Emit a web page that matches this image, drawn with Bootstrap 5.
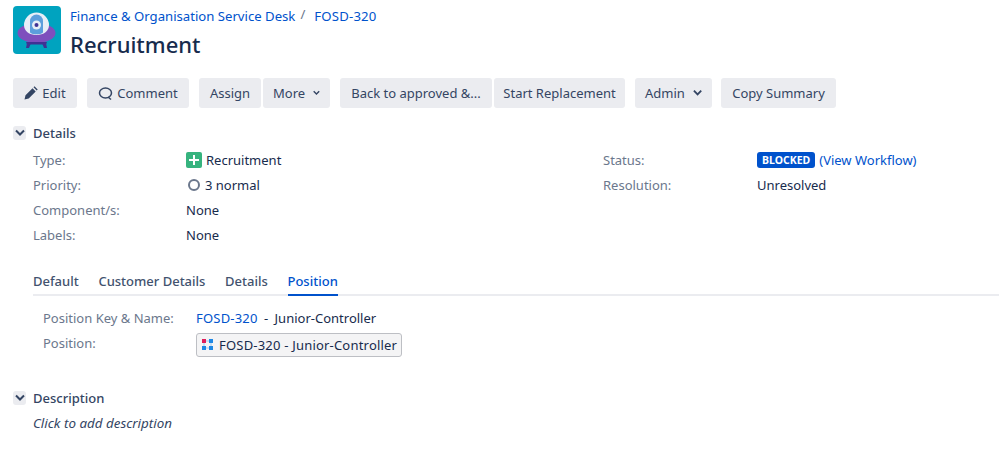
<!DOCTYPE html>
<html lang="en">
<head>
    <meta charset="UTF-8">
    <link rel="stylesheet" href="https://cdn.jsdelivr.net/npm/bootstrap@5.3.0/dist/css/bootstrap.min.css">
    <title>Recruitment</title>
    <style>
        body { font-family: "Noto Sans", "Open Sans", sans-serif; font-size: 13px; line-height: 20px; color: #172b4d; background: #fff; overflow: hidden; }
        a { color: #0052cc; text-decoration: none; }
        .page-wrap { padding: 6px 0 0 13px; }
        .issue-head { height: 54px; }
        .project-logo { width: 48px; height: 48px; flex: none; margin-right: 9px; }
        .crumbs { height: 20px; font-size: 13.15px; }
        .crumb-sep { color: #6b778c; margin: 0 9px 0 5px; position: relative; top: -2px; }
        .key-link { letter-spacing: .2px; }
        .pos-rest { word-spacing: 3px; }
        .issue-title { font-size: 22px; font-weight: 500; line-height: 28px; margin: 4px 0 0; color: #172b4d; }
        .tool-bar { margin-top: 18px; height: 30px; }
        .tool-btn { background: #ebecf0; color: #344563; border: 0; border-radius: 3px; height: 30px; padding: 0 10px; display: flex; align-items: center; justify-content: center; white-space: nowrap; font-size: 13px; }
        .tool-gap { margin-right: 10px; }
        .tool-join { margin-right: 2px; }
        .w-edit { width: 64px; } .w-comment { width: 102px; } .w-assign { width: 62px; } .w-more { width: 67px; }
        .w-back { width: 152px; } .w-start { width: 131px; } .w-admin { width: 77px; } .w-copy { width: 115px; margin-left: -1px; }
        .mod-head { height: 20px; font-weight: 500; color: #344563; }
        .twist { width: 13px; height: 14px; background: #ebecf0; border-radius: 3px; margin-right: 7px; display: flex; align-items: center; justify-content: center; }
        .sec-details { margin-top: 15px; }
        .prop-grid { margin: 4px 0 0 20px; }
        .prop-row { height: 25px; display: flex; align-items: center; }
        .prop-name { color: #6b778c; width: 153px; flex: none; }
        .prop-col-l { width: 570px; flex: none; }
        .prop-col-l + div .prop-name { width: 154px; }
        .prop-val { display: flex; align-items: center; }
        .type-icon { width: 16px; height: 16px; margin-right: 4px; }
        .prio-icon { width: 14px; height: 14px; margin: 0 4px 0 1px; }
        .status-pill { background: #0052cc; color: #fff; font-size: 10.5px; font-weight: 700; line-height: 16px; height: 16px; padding: 0 5px; border-radius: 3px; margin-right: 4px; }
        .tab-strip { margin: 24px 0 0 20px; height: 25px; border-bottom: 2px solid #ebecf0; }
        .tab-item { font-weight: 500; color: #42526e; margin-right: 19.7px; height: 25px; line-height: 21px; }
        .tab-item.is-on { color: #0052cc; border-bottom: 2px solid #0052cc; }
        .pos-grid { margin: 9px 0 0 30px; }
        .pos-name { color: #6b778c; width: 153px; flex: none; }
        .pos-row { height: 25px; display: flex; align-items: center; }
        .pos-row-tall { display: flex; margin-top: 3px; height: 24px; }
        .pos-box { border: 1px solid #bdbfc4; border-radius: 3px; background: #f4f4f5; width: 206px; height: 24px; display: flex; align-items: center; padding-left: 4px; white-space: nowrap; color: #172b4d; }
        .pos-icon { width: 14px; height: 14px; margin-right: 4px; flex: none; }
        .sec-desc { margin-top: 31px; }
        .desc-hint { margin: 5px 0 0 20px; font-style: italic; font-size: 13.4px; color: #344563; }
    </style>
</head>
<body>
    <div class="page-wrap">
        <!-- header -->
        <div class="issue-head d-flex">
            <svg class="project-logo" viewBox="0 0 48 48">
                <rect width="48" height="48" rx="4" fill="#00a3bf"/>
                <ellipse cx="23.500" cy="27" rx="19" ry="10" fill="#7e4fbd"/>
                <path d="M11 19a12.500 12.500 0 0 1 25 0c0 6-5 10-12.500 10S11 25 11 19z" fill="#e6eef7"/>
                <path d="M17 26V15a6.500 6.500 0 0 1 13 0v11c0 3-13 3-13 0z" fill="#5c9edc"/>
                <circle cx="23.500" cy="19" r="4.500" fill="#e6eef7"/>
                <circle cx="23.500" cy="19" r="2" fill="#403294"/>
                <path d="M13 36h21l-1 2.500H14z" fill="#403294"/>
                <path d="M14 37l-1 5h3l2-5zM33 37l1 5h-3l-2-5z" fill="#403294"/>
            </svg>
            <div>
                <div class="crumbs d-flex">
                    <a href="#">Finance &amp; Organisation Service Desk</a><span class="crumb-sep">/</span><a href="#" class="key-link">FOSD-320</a>
                </div>
                <h1 class="issue-title">Recruitment</h1>
            </div>
        </div>

        <!-- toolbar -->
        <div class="tool-bar d-flex">
            <button type="button" class="tool-btn tool-gap w-edit">
                <svg width="14" height="14" viewBox="0 0 14 14" class="me-1"><path d="M0.500 13.500l1-4.200 7-7 3.200 3.200-7 7zM9.500 1.300l1-1 3.200 3.200-1 1z" fill="#344563"/></svg>Edit
            </button>
            <button type="button" class="tool-btn tool-gap w-comment">
                <svg width="15" height="15" viewBox="0 0 15 15" class="me-1"><ellipse cx="7.500" cy="7" rx="6" ry="5" fill="none" stroke="#344563" stroke-width="1.500"/><path d="M10 11l3 2.500" stroke="#344563" stroke-width="1.500"/></svg>Comment
            </button>
            <button type="button" class="tool-btn tool-join w-assign">Assign</button>
            <button type="button" class="tool-btn tool-gap w-more">More
                <svg width="10" height="8" viewBox="0 0 10 8" class="ms-2"><path d="M1 1.500l4 4 4-4" fill="none" stroke="#344563" stroke-width="2"/></svg>
            </button>
            <button type="button" class="tool-btn tool-join w-back">Back to approved &amp;...</button>
            <button type="button" class="tool-btn tool-gap w-start">Start Replacement</button>
            <button type="button" class="tool-btn tool-gap w-admin">Admin
                <svg width="10" height="8" viewBox="0 0 10 8" class="ms-2"><path d="M1 1.500l4 4 4-4" fill="none" stroke="#344563" stroke-width="2"/></svg>
            </button>
            <button type="button" class="tool-btn w-copy">Copy Summary</button>
        </div>

        <!-- details -->
        <div class="sec-details mod-head d-flex align-items-center">
            <span class="twist"><svg width="10" height="8" viewBox="0 0 10 8"><path d="M1 1.500l4 4 4-4" fill="none" stroke="#344563" stroke-width="2"/></svg></span>Details
        </div>
        <div class="prop-grid d-flex">
            <div class="prop-col-l">
                <div class="prop-row"><span class="prop-name">Type:</span>
                    <span class="prop-val">
                        <svg class="type-icon" viewBox="0 0 16 16"><rect width="16" height="16" rx="2" fill="#36b37e"/><path d="M8 3v10M3 8h10" stroke="#fff" stroke-width="2"/></svg>Recruitment
                    </span>
                </div>
                <div class="prop-row"><span class="prop-name">Priority:</span>
                    <span class="prop-val">
                        <svg class="prio-icon" viewBox="0 0 14 14"><circle cx="7" cy="7" r="5" fill="none" stroke="#6b778c" stroke-width="2"/></svg>3 normal
                    </span>
                </div>
                <div class="prop-row"><span class="prop-name">Component/s:</span><span class="prop-val">None</span></div>
                <div class="prop-row"><span class="prop-name">Labels:</span><span class="prop-val">None</span></div>
            </div>
            <div>
                <div class="prop-row"><span class="prop-name">Status:</span>
                    <span class="prop-val"><span class="status-pill">BLOCKED</span><a href="#">(View Workflow)</a></span>
                </div>
                <div class="prop-row"><span class="prop-name">Resolution:</span><span class="prop-val">Unresolved</span></div>
            </div>
        </div>

        <!-- tabs -->
        <div class="tab-strip d-flex">
            <div class="tab-item">Default</div>
            <div class="tab-item">Customer Details</div>
            <div class="tab-item">Details</div>
            <div class="tab-item is-on">Position</div>
        </div>
        <div class="pos-grid">
            <div class="pos-row"><span class="pos-name">Position Key &amp; Name:</span><span><a href="#" class="key-link">FOSD-320</a><span class="pos-rest"> - Junior-Controller</span></span></div>
            <div class="pos-row-tall"><span class="pos-name">Position:</span>
                <div class="pos-box">
                    <svg class="pos-icon" viewBox="0 0 14 14">
                        <rect x="1" y="1" width="4" height="4" fill="#e01e5a"/><rect x="8" y="1" width="4" height="4" fill="#1e88e5"/>
                        <rect x="1" y="8" width="4" height="4" fill="#1e88e5"/><rect x="8" y="8" width="4" height="4" fill="#1e88e5"/>
                        <path d="M3 5v3M10 5v3M5 3h3M5 10h3" stroke="#9ec9ef" stroke-width="1"/>
                    </svg><span class="key-link">FOSD-320 - Junior-Controller</span>
                </div>
            </div>
        </div>

        <!-- description -->
        <div class="sec-desc mod-head d-flex align-items-center">
            <span class="twist"><svg width="10" height="8" viewBox="0 0 10 8"><path d="M1 1.500l4 4 4-4" fill="none" stroke="#344563" stroke-width="2"/></svg></span>Description
        </div>
        <div class="desc-hint">Click to add description</div>
    </div>
    <script src="https://cdn.jsdelivr.net/npm/bootstrap@5.3.0/dist/js/bootstrap.bundle.min.js"></script>
</body>
</html>
